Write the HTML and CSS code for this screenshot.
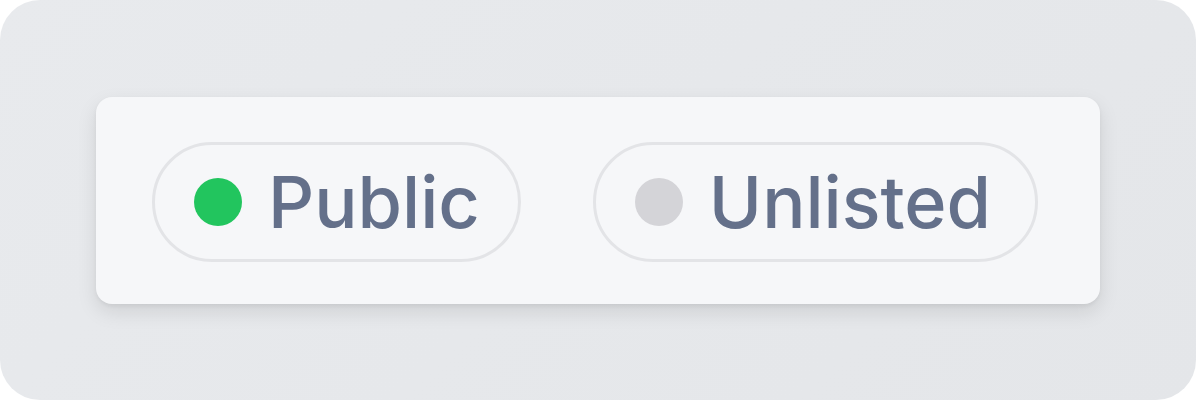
FILE: index.html
```html
<!DOCTYPE html>
<html>
<head>
    <title>Visibility</title>
    <link rel="stylesheet" href="styles.css">
</head>
<body>
    <div class="frame">
        <div class="card">
            <div class="pill">
                <span class="dot dot-public"></span>
                <span class="pill-label">Public</span>
            </div>
            <div class="pill">
                <span class="dot dot-unlisted"></span>
                <span class="pill-label">Unlisted</span>
            </div>
        </div>
    </div>
</body>
</html>
```

FILE: styles.css
```css
html, body {
    margin: 0;
    background: #ffffff;
}

body {
    font-family: Inter, "Noto Sans", sans-serif;
}

.frame {
    width: 1196px;
    height: 400px;
    box-sizing: border-box;
    border-radius: 40px;
    background: linear-gradient(135deg, #e8eaed 0%, #e4e6e9 100%);
    display: flex;
    justify-content: center;
    align-items: center;
}

.card {
    width: 1004px;
    height: 207px;
    box-sizing: border-box;
    padding: 4px 56px 0;
    background: #f6f7f9;
    border-radius: 16px;
    box-shadow: 0 8px 20px rgba(0, 0, 0, 0.10), 0 2px 4px rgba(0, 0, 0, 0.05);
    display: flex;
    align-items: center;
    gap: 72px;
}

.pill {
    height: 120px;
    box-sizing: border-box;
    border: 3px solid #e3e4e7;
    border-radius: 999px;
    padding: 0 38px 0 39px;
    display: flex;
    align-items: center;
    gap: 26px;
}

.pill:last-child {
    padding-right: 44px;
}

.dot {
    width: 48px;
    height: 48px;
    border-radius: 50%;
    flex-shrink: 0;
}

.dot-public {
    background: #22c55e;
}

.dot-unlisted {
    background: #d4d4d8;
}

.pill-label {
    font-size: 72px;
    font-weight: 500;
    color: #64708a;
    line-height: 1;
}
```
